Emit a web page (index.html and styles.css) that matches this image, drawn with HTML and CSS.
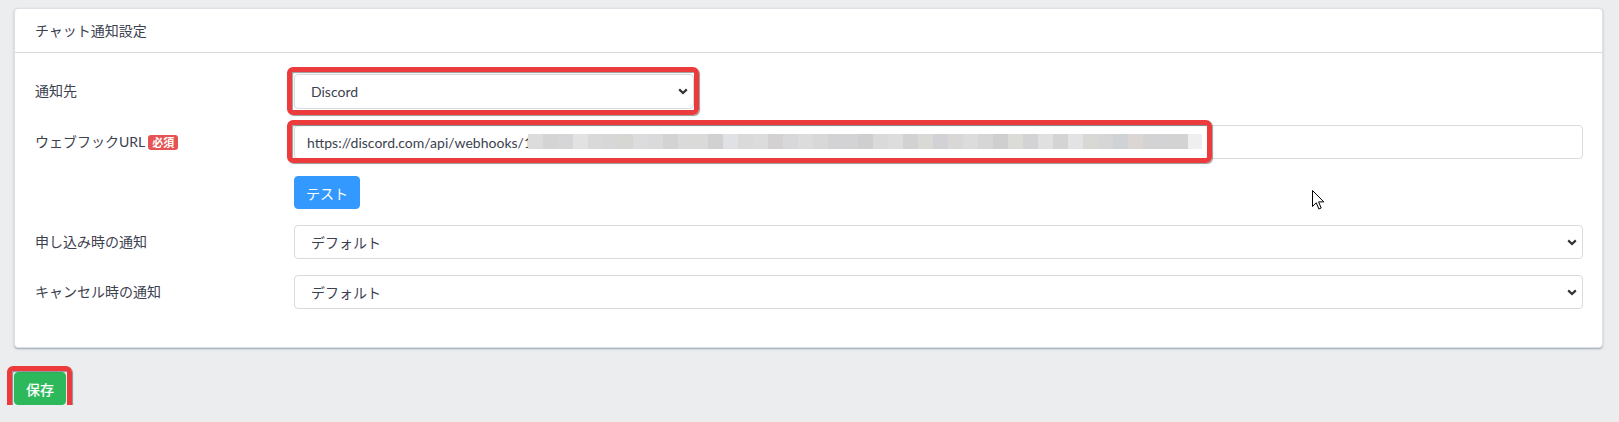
FILE: index.html
```html
<!DOCTYPE html>
<html lang="ja">

<head>
  <meta charset="utf-8" />
  <meta name="viewport" content="width=device-width, initial-scale=1" />
  <title>チャット通知設定</title>
  <link rel="stylesheet" href="styles.css">
</head>

<body>
  <div class="page">
    <div class="card">
      <div class="card-header">チャット通知設定</div>
      <div class="card-body">
        <div class="form-row">
          <label class="col-label">通知先</label>
          <div class="col-field">
            <div class="mark-wrap narrow">
              <select class="form-control">
                <option>Discord</option>
                <option>Slack</option>
                <option>Chatwork</option>
              </select>
              <span class="mark mark-select"></span>
            </div>
          </div>
        </div>

        <div class="form-row">
          <label class="col-label">ウェブフックURL <span class="badge">必須</span></label>
          <div class="col-field">
            <div class="mark-wrap">
              <input class="form-control" type="text" value="https://discord.com/api/webhooks/1">
              <span class="blur"></span>
              <span class="mark mark-url"></span>
            </div>
            <button type="button" class="btn btn-info">テスト</button>
            <!-- mouse pointer captured in the screenshot -->
            <svg class="pointer" width="13" height="21" viewBox="0 0 13 21">
              <path d="M0.5 0.5 L0.5 16.5 L4.3 12.8 L6.9 19 L9.2 18 L6.6 11.9 L11.8 11.9 Z" fill="#fff" stroke="#000" stroke-width="1" stroke-linejoin="miter" />
            </svg>
          </div>
        </div>

        <div class="form-row">
          <label class="col-label">申し込み時の通知</label>
          <div class="col-field">
            <select class="form-control">
              <option>デフォルト</option>
              <option>通知する</option>
              <option>通知しない</option>
            </select>
          </div>
        </div>

        <div class="form-row">
          <label class="col-label">キャンセル時の通知</label>
          <div class="col-field">
            <select class="form-control">
              <option>デフォルト</option>
              <option>通知する</option>
              <option>通知しない</option>
            </select>
          </div>
        </div>
      </div>
    </div>

    <div class="actions">
      <div class="mark-wrap">
        <button type="submit" class="btn btn-success">保存</button>
        <span class="mark mark-save"></span>
      </div>
    </div>
  </div>
</body>

</html>
```

FILE: styles.css
```css
body {
  margin: 0;
  background-color: #ebedef;
  font-family: "Lato", "Noto Sans CJK JP", sans-serif;
  font-size: 14px;
  line-height: 20px;
  color: #3c4150;
}

.page {
  padding: 8px 16px 0 14px;
}

.card {
  background-color: #fff;
  border: 1px solid #dcdfe4;
  border-radius: 4px;
  box-shadow: 0 1px 1px 0 rgba(60, 75, 100, .14), 0 2px 1px -1px rgba(60, 75, 100, .12), 0 1px 3px 0 rgba(60, 75, 100, .2);
}

.card-header {
  padding: 12px 20px 11px;
  border-bottom: 1px solid #d8dbe0;
}

.card-body {
  padding: 21px 19px 22px 20px;
}

.form-row {
  display: grid;
  grid-template-columns: 259px 1fr;
  align-items: start;
  margin-bottom: 16px;
}

.col-label {
  display: flex;
  align-items: center;
  height: 34px;
}

.col-field {
  position: relative;
}

.badge {
  display: inline-block;
  margin-left: 3px;
  padding: 0 4px;
  height: 15px;
  line-height: 15px;
  border-radius: 3px;
  background-color: #e55353;
  color: #fff;
  font-size: 11px;
  font-weight: 700;
}

.form-control {
  display: block;
  box-sizing: border-box;
  width: 100%;
  height: 34px;
  padding: 6px 12px;
  border: 1px solid #d8dbe0;
  border-radius: 4px;
  background-color: #fff;
  font-family: inherit;
  font-size: 14px;
  color: #3c4150;
}

select.form-control {
  -webkit-appearance: none;
  appearance: none;
  padding-left: 16px;
  background-image: url("data:image/svg+xml,%3Csvg xmlns='http://www.w3.org/2000/svg' width='10' height='7' viewBox='0 0 10 7'%3E%3Cpath d='M1.2 1.4 L5 5 L8.8 1.4' fill='none' stroke='%23333' stroke-width='2.2'/%3E%3C/svg%3E");
  background-repeat: no-repeat;
  background-position: right 5px center;
  background-size: 10px 7px;
}

.mark-wrap {
  position: relative;
}

.mark-wrap.narrow {
  width: 400px;
}

.mark-wrap.narrow .form-control {
  height: 35px;
}

/* red annotation frames drawn over the screenshot */
.mark {
  position: absolute;
  border: 5px solid #ec3b3d;
  border-radius: 6px;
  box-shadow: 1px 1px 1px rgba(0, 0, 0, .4), inset 1px 1px 1px rgba(0, 0, 0, .4);
  pointer-events: none;
}

.mark-select {
  top: -7px;
  left: -7px;
  right: -5px;
  bottom: -6px;
}

.mark-url {
  top: -5px;
  left: -7px;
  width: 915px;
  bottom: -4px;
}

.mark-save {
  top: -6px;
  left: -7px;
  right: -6px;
  bottom: -8px;
}

.blur {
  position: absolute;
  top: 9px;
  left: 234px;
  width: 674px;
  height: 15px;
  background: linear-gradient(90deg,
      #dcdcdc 0 15px, #d4d4d4 15px 30px, #d6d6d9 30px 45px, #e2e2e2 45px 60px,
      #d9d9d9 60px 75px, #d7d7d7 75px 90px, #d6d6d3 90px 105px, #dcdcdf 105px 120px,
      #dadada 120px 135px, #d3d3d3 135px 150px, #dadada 150px 165px, #dadad8 165px 180px,
      #d1d1d1 180px 195px, #e0e1e4 195px 210px, #dadada 210px 225px, #dcdcdc 225px 240px,
      #d3d1d1 240px 255px, #d8d8da 255px 270px, #dcdcdc 270px 285px, #d8d8d8 285px 300px,
      #d3d3d6 300px 315px, #d3d3d5 315px 330px, #cfcfcf 330px 345px, #dadada 345px 360px,
      #dddddd 360px 375px, #d2d2d2 375px 390px, #d9d9d6 390px 405px, #d2d2d6 405px 420px,
      #d9d8d6 420px 435px, #dcdcdc 435px 450px, #d6d6d6 450px 465px, #cfcfcf 465px 480px,
      #dbdbd8 480px 495px, #d3d3d5 495px 510px, #e0e0e0 510px 525px, #d4d4d4 525px 540px,
      #e3e3e5 540px 555px, #d8d8d4 555px 570px, #d6d6d6 570px 585px, #cfd3d6 585px 600px,
      #dbd6d3 600px 615px, #d3d3d3 615px 630px, #d3d3d6 630px 645px, #d3d3d3 645px 660px,
      #efefef 660px 674px);
}

.btn {
  display: inline-block;
  height: 33px;
  padding: 0;
  border: 1px solid transparent;
  border-radius: 4px;
  font-family: inherit;
  font-size: 14px;
  text-align: center;
  white-space: nowrap;
  color: #fff;
  cursor: pointer;
}

.btn-info {
  display: block;
  margin-top: 17px;
  width: 66px;
  background-color: #39f;
  border-color: #39f;
}

.btn-success {
  display: block;
  width: 52px;
  background-color: #2eb85c;
  border-color: #2eb85c;
  font-weight: 500;
}

.pointer {
  position: absolute;
  top: 65px;
  left: 1018px;
}

.actions {
  padding-top: 24px;
  display: flex;
}
```
